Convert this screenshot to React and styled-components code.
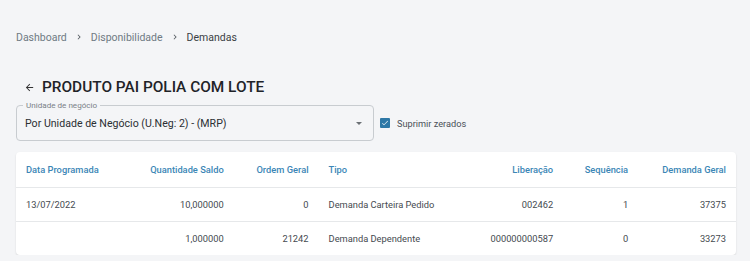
import styled, { createGlobalStyle } from "styled-components";

const Global = createGlobalStyle`
  body {
    margin: 0;
    background: #f4f5f7;
    font-family: Roboto, "Liberation Sans", sans-serif;
  }
`;

const Page = styled.div`
  padding: 29px 14px 0 16px;
`;

const Crumbs = styled.nav`
  display: flex;
  align-items: center;
  height: 16px;
  font-size: 10.5px;
  color: #6f7a83;
`;

const Crumb = styled.span`
  color: ${(p) => (p.$current ? "#3a3f44" : "#6f7a83")};
`;

const Sep = styled.svg`
  width: 10px;
  height: 10px;
  margin: 0 7px;
  fill: #555b61;
`;

const TitleRow = styled.div`
  display: flex;
  align-items: center;
  margin-top: 30px;
  height: 24px;
  padding-left: 8px;
`;

const Back = styled.svg`
  width: 11px;
  height: 11px;
  margin-right: 7px;
  fill: #333;
`;

const Title = styled.h1`
  margin: 0;
  font-size: 15.4px;
  font-weight: 500;
  color: #1f2328;
`;

const Filters = styled.div`
  display: flex;
  align-items: center;
  margin-top: 6px;
`;

const Select = styled.div`
  position: relative;
  width: 358px;
  height: 36px;
  box-sizing: border-box;
  border: 1px solid #c8ccd0;
  border-radius: 4px;
  display: flex;
  align-items: center;
  padding: 0 11px 0 8px;
  font-size: 10.6px;
  color: #2b2f33;
`;

const Legend = styled.span`
  position: absolute;
  top: -6px;
  left: 6px;
  padding: 0 3px;
  background: #f4f5f7;
  font-size: 8.1px;
  line-height: 10px;
  color: #7a8188;
`;

const Value = styled.span`
  flex: 1;
  margin-top: 1px;
`;

const Caret = styled.span`
  width: 0;
  height: 0;
  border-left: 3.5px solid transparent;
  border-right: 3.5px solid transparent;
  border-top: 3.5px solid #6b7075;
`;

const Check = styled.label`
  display: flex;
  align-items: center;
  margin-left: 6px;
  font-size: 9.2px;
  color: #4a5057;
`;

const Box = styled.span`
  width: 10px;
  height: 10px;
  border-radius: 1px;
  background: #2e78a6;
  display: flex;
  align-items: center;
  justify-content: center;
  margin-right: 7px;
`;

const Card = styled.div`
  margin-top: 11px;
  background: #fff;
  border-radius: 4px;
  box-shadow: 0 1px 2px rgba(0, 0, 0, 0.12);
`;

const Table = styled.table`
  width: 100%;
  border-collapse: collapse;
  font-size: 9.3px;
`;

const Th = styled.th`
  height: 35px;
  padding: 0 10px;
  font-weight: 500;
  color: #3b86b6;
  text-align: ${(p) => (p.$right ? "right" : "left")};
  border-bottom: 1px solid #e6e8ea;
`;

const Td = styled.td`
  height: 33px;
  padding: 0 10px;
  color: #454a50;
  text-align: ${(p) => (p.$right ? "right" : "left")};
  border-bottom: ${(p) => (p.$last ? "none" : "1px solid #e6e8ea")};
`;

const cols = [
  { label: "Data Programada", key: "data", w: 110 },
  { label: "Quantidade Saldo", key: "qtd", w: 108, right: true },
  { label: "Ordem Geral", key: "ordem", w: 85, right: true },
  { label: "Tipo", key: "tipo", w: 150 },
  { label: "Liberação", key: "lib", w: 95, right: true },
  { label: "Sequência", key: "seq", w: 75, right: true },
  { label: "Demanda Geral", key: "dem", w: 98, right: true },
];

const rows = [
  { data: "13/07/2022", qtd: "10,000000", ordem: "0", tipo: "Demanda Carteira Pedido", lib: "002462", seq: "1", dem: "37375" },
  { data: "", qtd: "1,000000", ordem: "21242", tipo: "Demanda Dependente", lib: "000000000587", seq: "0", dem: "33273" },
];

export default function App() {
  return (
    <>
      <Global />
      <Page>
        <Crumbs>
          <Crumb>Dashboard</Crumb>
          <Sep viewBox="0 0 24 24">
            <path d="M8.59 16.59L13.17 12 8.59 7.41 10 6l6 6-6 6z" />
          </Sep>
          <Crumb>Disponibilidade</Crumb>
          <Sep viewBox="0 0 24 24">
            <path d="M8.59 16.59L13.17 12 8.59 7.41 10 6l6 6-6 6z" />
          </Sep>
          <Crumb $current>Demandas</Crumb>
        </Crumbs>

        <TitleRow>
          <Back viewBox="0 0 24 24">
            <path d="M20 11H7.83l5.59-5.59L12 4l-8 8 8 8 1.41-1.41L7.83 13H20v-2z" />
          </Back>
          <Title>PRODUTO PAI POLIA COM LOTE</Title>
        </TitleRow>

        <Filters>
          <Select>
            <Legend>Unidade de negócio</Legend>
            <Value>Por Unidade de Negócio (U.Neg: 2) - (MRP)</Value>
            <Caret />
          </Select>
          <Check>
            <Box>
              <svg width="8" height="8" viewBox="0 0 24 24">
                <path d="M9 16.2L4.8 12l-1.4 1.4L9 19 21 7l-1.4-1.4L9 16.2z" fill="#fff" />
              </svg>
            </Box>
            Suprimir zerados
          </Check>
        </Filters>

        <Card>
          <Table>
            <colgroup>
              {cols.map((c) => (
                <col key={c.key} style={{ width: c.w }} />
              ))}
            </colgroup>
            <thead>
              <tr>
                {cols.map((c) => (
                  <Th key={c.key} $right={c.right}>
                    {c.label}
                  </Th>
                ))}
              </tr>
            </thead>
            <tbody>
              {rows.map((r, i) => (
                <tr key={i}>
                  {cols.map((c) => (
                    <Td key={c.key} $right={c.right} $last={i === rows.length - 1}>
                      {r[c.key]}
                    </Td>
                  ))}
                </tr>
              ))}
            </tbody>
          </Table>
        </Card>
      </Page>
    </>
  );
}
